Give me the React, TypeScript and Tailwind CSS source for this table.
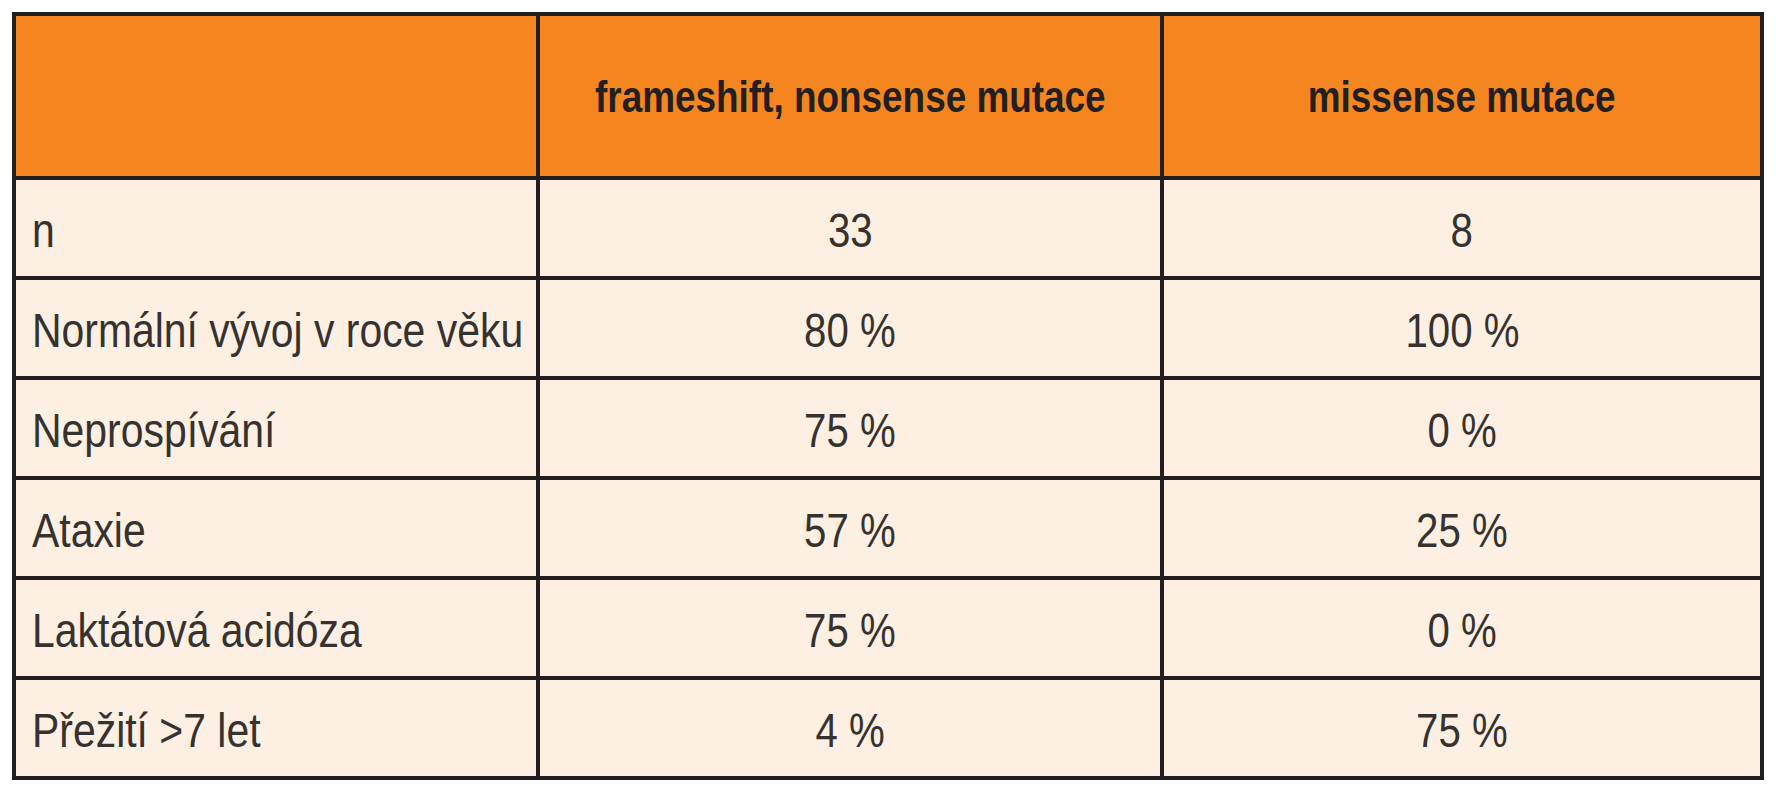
import React from "react";

interface Row {
    label: string;
    frameshift: string;
    missense: string;
}

const rows: Row[] = [
    { label: "n", frameshift: "33", missense: "8" },
    { label: "Normální vývoj v roce věku", frameshift: "80 %", missense: "100 %" },
    { label: "Neprospívání", frameshift: "75 %", missense: "0 %" },
    { label: "Ataxie", frameshift: "57 %", missense: "25 %" },
    { label: "Laktátová acidóza", frameshift: "75 %", missense: "0 %" },
    { label: "Přežití >7 let", frameshift: "4 %", missense: "75 %" },
];

const font = "font-['Liberation_Sans_Narrow','Liberation_Sans',Arial,sans-serif]";

// No condensed face is installed, so squeeze the regular one horizontally
const narrow = "inline-block whitespace-nowrap leading-none";

export default function App() {
    return (
        <div className={`min-h-[800px] w-[1780px] bg-white p-3 ${font}`}>
            {/* Table frame: dark background shows through the gaps as cell borders */}
            <div className="grid w-[1752px] grid-cols-[520px_620px_596px] grid-rows-[160px_repeat(6,96px)] gap-[4px] border-[4px] border-[#231f20] bg-[#231f20]">
                <div className="bg-[#f5861f]" />
                <div className="flex items-center justify-center bg-[#f5861f] text-[45px] font-bold text-[#231f20]">
                    <span className={`${narrow} scale-x-[0.82]`}>frameshift, nonsense mutace</span>
                </div>
                <div className="flex items-center justify-center bg-[#f5861f] text-[45px] font-bold text-[#231f20]">
                    <span className={`${narrow} scale-x-[0.82]`}>missense mutace</span>
                </div>

                {rows.map((row) => (
                    <React.Fragment key={row.label}>
                        <div className="flex items-center bg-[#fdf0e3] pl-4 text-[49px] text-[#363230]">
                            <span className={`${narrow} mt-[5px] origin-left scale-x-[0.835]`}>{row.label}</span>
                        </div>
                        <div className="flex items-center justify-center bg-[#fdf0e3] text-[49px] text-[#363230]">
                            <span className={`${narrow} mt-[5px] scale-x-[0.82]`}>{row.frameshift}</span>
                        </div>
                        <div className="flex items-center justify-center bg-[#fdf0e3] text-[49px] text-[#363230]">
                            <span className={`${narrow} mt-[5px] scale-x-[0.82]`}>{row.missense}</span>
                        </div>
                    </React.Fragment>
                ))}
            </div>
        </div>
    );
}
